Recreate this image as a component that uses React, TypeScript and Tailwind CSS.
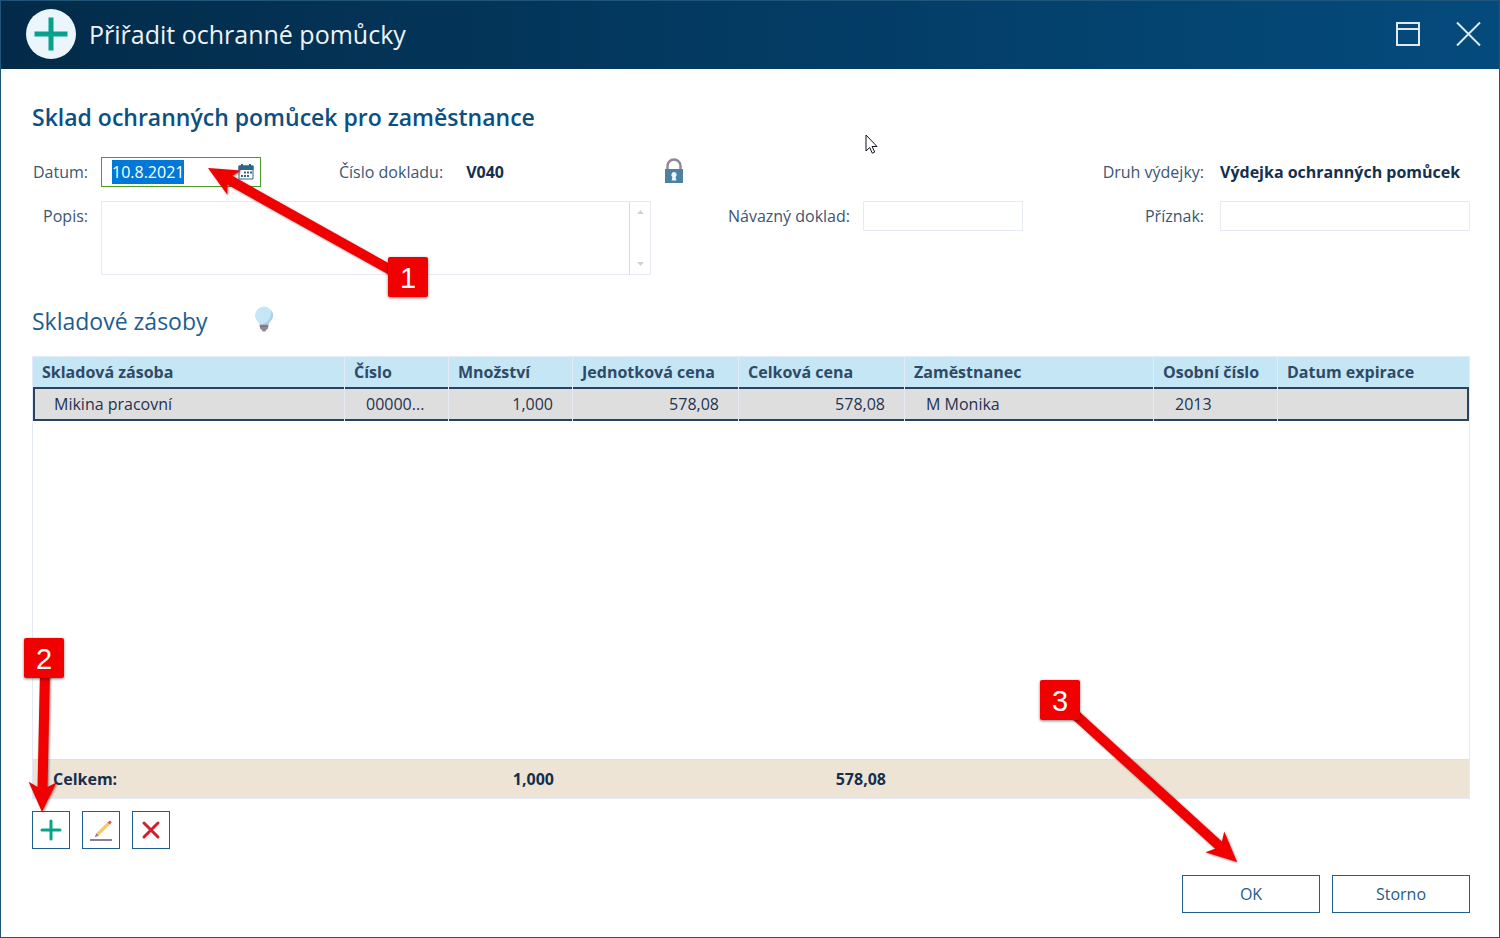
import React, { useEffect, useRef, useState } from 'react';

type Align = 'left' | 'right';
interface Column { key: string; label: string; width: string; align: Align; }
interface StockRow { [key: string]: string; }
interface Callout { n: number; box: string; from: [number, number]; to: [number, number]; }

const COLUMNS: Column[] = [
  { key: 'item',     label: 'Skladová zásoba',  width: 'w-[312px]', align: 'left' },
  { key: 'number',   label: 'Číslo',            width: 'w-[104px]', align: 'left' },
  { key: 'quantity', label: 'Množství',         width: 'w-[124px]', align: 'right' },
  { key: 'price',    label: 'Jednotková cena',  width: 'w-[166px]', align: 'right' },
  { key: 'total',    label: 'Celková cena',     width: 'w-[166px]', align: 'right' },
  { key: 'employee', label: 'Zaměstnanec',      width: 'w-[249px]', align: 'left' },
  { key: 'personal', label: 'Osobní číslo',     width: 'w-[124px]', align: 'left' },
  { key: 'expires',  label: 'Datum expirace',   width: '',          align: 'left' },
];

const ROWS: StockRow[] = [
  { item: 'Mikina pracovní', number: '00000...', quantity: '1,000', price: '578,08', total: '578,08', employee: 'M Monika', personal: '2013', expires: '' },
];

const TOTALS: StockRow = { item: 'Celkem:', quantity: '1,000', total: '578,08' };

const CALLOUTS: Callout[] = [
  { n: 1, box: 'left-[388px] top-[257px]',  from: [396, 273],  to: [208, 168] },
  { n: 2, box: 'left-[24px] top-[638px]',   from: [45, 670],   to: [42, 812] },
  { n: 3, box: 'left-[1040px] top-[680px]', from: [1070, 710], to: [1237, 862] },
];

const INPUT = 'border border-[#e6e9f6] bg-white text-base text-[#14304f] outline-none';
const BUTTON = 'border border-[#1f5f8d] bg-white hover:bg-[#eaf4fb]';

// Points of an arrow whose head has a notched back edge
function arrowPoints([x1, y1]: [number, number], [x2, y2]: [number, number]) {
  const len = Math.hypot(x2 - x1, y2 - y1);
  const ux = (x2 - x1) / len;
  const uy = (y2 - y1) / len;
  const at = (back: number, side: number) => `${x2 - ux * back - uy * side},${y2 - uy * back + ux * side}`;
  return [at(0, 0), at(30, 14), at(25, 5), at(len, 5), at(len, -5), at(25, -5), at(30, -14)].join(' ');
}

function CalendarIcon() {
  return (
    <svg width="16" height="16" viewBox="0 0 16 16" aria-hidden="true">
      <path d="M1 2h14v13H1z" fill="#fff" stroke="#2f678c" />
      <path d="M.5 1.5h15V6H.5zM3 0h2v2H3zM11 0h2v2h-2z" fill="#2f678c" />
      <path d="M6 7.500h2v2H6zM9 7.500h2v2H9zM12 7.500h2v2h-2zM3 11h2v2H3zM6 11h2v2H6zM9 11h2v2H9z" fill="#2f678c" />
    </svg>
  );
}

function LockIcon() {
  return (
    <svg width="20" height="26" viewBox="0 0 20 26" aria-hidden="true">
      <path d="M3.500 12V9a6.500 6.500 0 0 1 13 0v3" fill="none" stroke="#8d8799" strokeWidth="2.400" />
      <path d="M1 12h18v15H1z" fill="#4c81a4" />
      <path d="M10 15a2.800 2.800 0 0 1 1.600 5l.8 3.500H7.600l.8-3.500A2.800 2.800 0 0 1 10 15z" fill="#eef6fb" />
    </svg>
  );
}

function BulbIcon() {
  return (
    <svg width="20" height="26" viewBox="0 0 20 26" aria-hidden="true">
      <path d="M10 .5a9 9 0 0 1 9 9c0 4.500-4 6-4.500 9h-9C5 15.500 1 14 1 9.500a9 9 0 0 1 9-9z" fill="#c5e6f6" />
      <path d="M17.200 4A9 9 0 0 1 19 9.500c0 4.500-4 6-4.500 9H8c6-2 10-7 9.200-14.500z" fill="#a9cfe2" />
      <path d="M5.500 18.500h9l-.5 4-2 1.500-.5 1.500h-3L8 24l-2-1.500z" fill="#8d8799" />
      <path d="M6 20.500h8" stroke="#756f82" />
    </svg>
  );
}

function PencilIcon() {
  return (
    <svg width="24" height="24" viewBox="0 0 24 24" aria-hidden="true">
      <path d="M2 22h20" stroke="#8d7d99" strokeWidth="2" strokeLinecap="square" />
      <path d="M7.500 15.500 18.800 4.200l2 2L9.500 17.500z" fill="#fcc75c" stroke="#fcc75c" strokeWidth=".6" />
      <path d="M18.600 4.400l1.500-1.500q1.100-.6 1.900.3t.3 1.900L20.800 6.400z" fill="#e0545c" />
      <path d="M7.300 15.300l2.400 2.400L5.800 19.200z" fill="#8d7d99" />
    </svg>
  );
}

function Callouts() {
  return (
    <div className="pointer-events-none absolute -inset-px overflow-hidden">
      <svg className="absolute inset-0 h-full w-full drop-shadow-[1px_1px_1px_rgba(0,0,0,0.45)]" aria-hidden="true">
        {CALLOUTS.map(c => (
          <polygon key={c.n} points={arrowPoints(c.from, c.to)} fill="#f00000" />
        ))}
      </svg>
      {CALLOUTS.map(c => (
        <div key={c.n}
          className={`absolute flex size-10 items-center justify-center rounded-xs bg-[#f00000] pt-0.5 font-['Liberation_Sans',sans-serif] text-[29px] leading-none text-white shadow-[0_1px_3px_rgba(0,0,0,0.5)] ${c.box}`}>
          {c.n}
        </div>
      ))}
      {/* Mouse pointer */}
      <svg className="absolute left-[865px] top-[134px]" width="13" height="21" viewBox="0 0 13 21" aria-hidden="true">
        <path d="M1 1v16l3.700-3.500 2.600 5.700 2.400-1.100-2.600-5.600H12z" fill="#fff" stroke="#111122" />
      </svg>
    </div>
  );
}

function StockTable() {
  return (
    <table className="w-full flex-1 table-fixed border-separate border-spacing-0 border border-[#e6e9f6] text-base">
      <thead>
        <tr className="h-[30px] bg-[#c5e6f5] text-left text-[#2f4a66]">
          {COLUMNS.map(c => (
            <th key={c.key} scope="col" className={`border-r border-[#e6e9f6] px-[9px] font-bold leading-6 last:border-r-0 ${c.width}`}>
              {c.label}
            </th>
          ))}
        </tr>
      </thead>
      <tbody>
        {ROWS.map((row, i) => (
          <tr key={i} className="h-[34px] bg-[#dedede] text-[#1f3350]">
            {COLUMNS.map(c => (
              <td key={c.key}
                className={`border-r border-[#e6e9f6] pl-[21px] pr-[19px] leading-6 shadow-[inset_0_2px_0_#27435e,inset_0_-2px_0_#27435e] first:shadow-[inset_2px_2px_0_#27435e,inset_0_-2px_0_#27435e] last:border-r-0 last:shadow-[inset_-2px_2px_0_#27435e,inset_0_-2px_0_#27435e] ${
                  c.align === 'right' ? 'text-right' : 'whitespace-nowrap'
                }`}>
                {row[c.key]}
              </td>
            ))}
          </tr>
        ))}
        <tr>
          <td colSpan={COLUMNS.length} />
        </tr>
      </tbody>
      <tfoot>
        <tr className="h-[39px] bg-[#eee4d6] font-bold text-[#14304f]">
          {COLUMNS.map(c => (
            <td key={c.key} className={`border-t border-[#dfdfe4] pl-5 pr-[19px] ${c.align === 'right' ? 'text-right' : ''}`}>
              {TOTALS[c.key]}
            </td>
          ))}
        </tr>
      </tfoot>
    </table>
  );
}

export default function App() {
  const [date, setDate] = useState('10.8.2021');
  const dateRef = useRef<HTMLInputElement>(null);

  useEffect(() => {
    dateRef.current?.focus();
    dateRef.current?.select();
  }, []);

  return (
    <div className="relative flex h-screen flex-col border border-[#1f5578] bg-white font-['Open_Sans','Noto_Sans',sans-serif] text-base text-[#3c5573]">
      {/* Title bar */}
      <header className="flex h-[68px] shrink-0 items-center bg-linear-to-r from-[#032b49] to-[#044b7d] pb-0.5 pl-[25px] pr-[18px]">
        <svg width="50" height="50" viewBox="0 0 50 50" aria-hidden="true">
          <circle cx="25" cy="25" r="25" fill="#eaf5fc" />
          <path d="M25 11v28M11 25h28" stroke="#08a18b" strokeWidth="5" strokeLinecap="square" strokeLinejoin="round" />
        </svg>
        <h1 className="ml-[13px] flex-1 pt-0.5 text-[25px] text-[#eef3f7]">Přiřadit ochranné pomůcky</h1>
        <button type="button" aria-label="Maximalizovat" className="mr-9">
          <svg width="24" height="24" viewBox="0 0 24 24" fill="none" stroke="#dfe9f0" strokeWidth="2" aria-hidden="true">
            <path d="M1 1h22v22H1zM1 7h22" />
          </svg>
        </button>
        <button type="button" aria-label="Zavřít">
          <svg width="25" height="24" viewBox="0 0 25 24" fill="none" stroke="#dfe9f0" strokeWidth="2" aria-hidden="true">
            <path d="M1 .5l23 23M24 .5l-23 23" />
          </svg>
        </button>
      </header>

      <main className="flex min-h-0 flex-1 flex-col pb-6 pl-[31px] pr-[29px] pt-8">
        <h2 className="text-[23px] font-semibold leading-8 text-[#0b4f83]">Sklad ochranných pomůcek pro zaměstnance</h2>

        <form className="mt-6 grid grid-cols-[56px_550px_186px_160px_1fr_250px] gap-x-[13px] gap-y-[14px] leading-[30px]">
          <label htmlFor="date" className="text-right">Datum:</label>
          <div className="flex">
            <div className="flex h-[30px] w-40 items-center border border-[#4f9a26] pl-2.5 pr-1.5">
              <input id="date" ref={dateRef} value={date} onChange={e => setDate(e.target.value)}
                className="min-w-0 flex-1 bg-white text-base text-[#14304f] outline-none selection:bg-[#0078d7] selection:text-white" />
              <button type="button" aria-label="Kalendář"><CalendarIcon /></button>
            </div>
            <span className="ml-[78px]">Číslo dokladu:</span>
            <strong className="ml-[23px] text-[#14304f]">V040</strong>
          </div>
          <LockIcon />
          <span className="col-span-2 pr-[3px] text-right">Druh výdejky:</span>
          <strong className="whitespace-nowrap text-[#14304f]">Výdejka ochranných pomůcek</strong>

          <label htmlFor="note" className="text-right">Popis:</label>
          <div className="flex h-[74px] border border-[#e6e9f6]">
            <textarea id="note" className="min-w-0 flex-1 resize-none outline-none" />
            <div className="flex w-[21px] flex-col items-center justify-between border-l border-[#dcdcdc] py-2">
              <svg width="7" height="4" viewBox="0 0 7 4" aria-hidden="true"><path d="M0 4L3.500 0 7 4z" fill="#d2d2d2" /></svg>
              <svg width="7" height="4" viewBox="0 0 7 4" aria-hidden="true"><path d="M0 0l3.500 4L7 0z" fill="#d2d2d2" /></svg>
            </div>
          </div>
          <label htmlFor="linked" className="text-right">Návazný doklad:</label>
          <input id="linked" className={`h-[30px] min-w-0 px-2 ${INPUT}`} />
          <label htmlFor="flag" className="pr-[3px] text-right">Příznak:</label>
          <input id="flag" className={`h-[30px] min-w-0 px-2 ${INPUT}`} />
        </form>

        <div className="mt-[30px] flex items-center">
          <h3 className="text-[23px] leading-8 text-[#1d5d90]">Skladové zásoby</h3>
          <button type="button" aria-label="Nápověda" className="ml-[46px] pb-1"><BulbIcon /></button>
        </div>

        <div className="mt-[19px] flex min-h-0 flex-1">
          <StockTable />
        </div>

        <div className="mt-3 flex gap-3">
          <button type="button" aria-label="Přidat" className={`flex size-[38px] items-center justify-center ${BUTTON}`}>
            <svg width="22" height="22" viewBox="0 0 22 22" aria-hidden="true">
              <path d="M11 2v18M2 11h18" stroke="#08a18b" strokeWidth="3" strokeLinecap="round" />
            </svg>
          </button>
          <button type="button" aria-label="Upravit" className={`flex size-[38px] items-center justify-center ${BUTTON}`}>
            <PencilIcon />
          </button>
          <button type="button" aria-label="Smazat" className={`flex size-[38px] items-center justify-center ${BUTTON}`}>
            <svg width="20" height="20" viewBox="0 0 20 20" aria-hidden="true">
              <path d="M3 3l14 14M17 3L3 17" stroke="#d0202e" strokeWidth="3" strokeLinecap="round" />
            </svg>
          </button>
        </div>

        <div className="mt-[26px] flex justify-end gap-3 text-[#1d5d90]">
          <button type="button" className={`h-[38px] w-[138px] ${BUTTON}`}>OK</button>
          <button type="button" className={`h-[38px] w-[138px] ${BUTTON}`}>Storno</button>
        </div>
      </main>

      <Callouts />
    </div>
  );
}
